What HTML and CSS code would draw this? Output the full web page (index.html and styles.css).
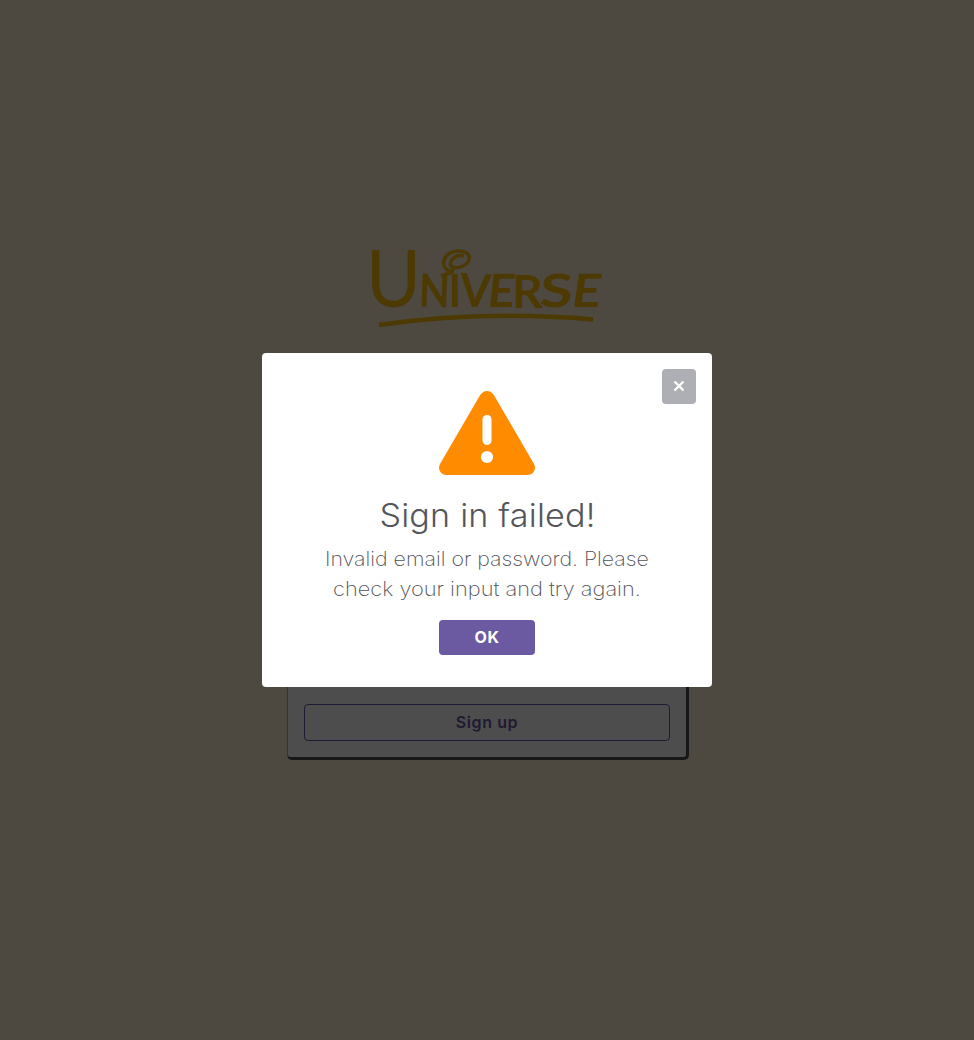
FILE: index.html
```html
<!DOCTYPE html>
<html lang="en">
<head>
<meta charset="utf-8">
<title>Universe</title>
<link rel="stylesheet" href="styles.css">
</head>
<body>
<main class="page">
  <svg class="logo" viewBox="-2 0 240 85" role="img" aria-label="Universe">
    <g class="logo-text">
      <text class="cap" x="-3" y="62" textLength="55" lengthAdjust="spacingAndGlyphs">U</text>
      <text x="50" y="62" textLength="31" lengthAdjust="spacingAndGlyphs" transform="rotate(2 65 45)">N</text>
      <text x="79.500" y="62" textLength="13" lengthAdjust="spacingAndGlyphs">I</text>
      <text x="91" y="62" textLength="31" lengthAdjust="spacingAndGlyphs" transform="rotate(3 108 45)">V</text>
      <text x="118" y="62" textLength="27" lengthAdjust="spacingAndGlyphs" transform="skewX(-6) translate(6 0)">E</text>
      <text x="143" y="63" textLength="31" lengthAdjust="spacingAndGlyphs">R</text>
      <text x="170" y="62" textLength="33" lengthAdjust="spacingAndGlyphs" transform="skewX(-4) translate(4 0)">S</text>
      <text x="204" y="62" textLength="29" lengthAdjust="spacingAndGlyphs" transform="skewX(-8) translate(6 0)">E</text>
    </g>
    <g class="logo-line">
      <path d="M83 27C69 23 74 7 88 6C102 5 104 16 94 21C85 25 78 21 83 15C86 11 91 10 95 11"/>
      <path d="M72 31L83 27L84 23"/>
      <path class="swash" d="M10 80Q115 65 224 74.500"/>
    </g>
  </svg>
  <section class="card"><button class="signup">Sign up</button></section>
</main>
<div class="overlay">
  <section class="modal" role="dialog" aria-modal="true">
    <button class="close" aria-label="Close">
      <svg width="12" height="12" viewBox="0 0 12 12"><path d="M1.500 1.500L10.500 10.500M10.500 1.500L1.500 10.500"/></svg>
    </button>
    <svg class="warning" viewBox="0 0 96 84" aria-hidden="true">
      <path fill="#ff8c00" d="M41.300 3.800Q44 0 48 0T54.700 3.800L95 73Q97 77 95 80.200Q93 84 88.500 84H7.500Q3 84 1 80.200Q-1 77 1 73Z"/>
      <rect x="43.500" y="24" width="9" height="30" rx="4.500" fill="#fff"/>
      <circle cx="48" cy="66" r="6.100" fill="#fff"/>
    </svg>
    <h1 class="title">Sign in failed!</h1>
    <p class="message"><span class="line first">Invalid email or password. Please</span> <span class="line second">check your input and try again.</span></p>
    <button class="ok">OK</button>
  </section>
</div>
</body>
</html>
```
FILE: styles.css
```css
* { box-sizing: border-box; }
body { margin: 0; background: #4d4941; font-family: Inter, "Open Sans", sans-serif; }
button { font-family: inherit; padding: 0; }
.page { height: 1040px; display: flex; flex-direction: column; align-items: center; padding-top: 245px; }
.logo { width: 240px; height: 85px; flex: none; overflow: visible; }
.logo-text { font-family: Lato, sans-serif; font-size: 46px; font-weight: 700; fill: #4d3a02; }
.logo-text .cap { font-size: 79px; font-weight: 400; }
.logo-line { fill: none; stroke: #4d3a02; stroke-width: 3.500; }
.logo-line .swash { stroke-width: 4.500; }
.card { width: 402px; height: 380px; margin: 50px 0 0 2px; display: flex; align-items: flex-end; padding: 0 16px 16px; border: 1px solid; border-width: 1px 3px 3px 1px; border-color: #353535 #171717 #171717 #353535; border-radius: 5px; background: #4d4d4d; }
.signup { width: 366px; height: 37px; padding-bottom: 2px; border: 1px solid #1f1a35; border-radius: 4px; background: transparent; color: #1f1a31; font-size: 16px; font-weight: 600; letter-spacing: .6px; }
.overlay { position: absolute; inset: 0; display: flex; justify-content: center; align-items: center; }
.modal { position: relative; width: 450px; height: 334px; display: flex; flex-direction: column; align-items: center; padding-top: 38px; background: #fff; border-radius: 4px; color: #55565b; }
.close { position: absolute; top: 16px; right: 16px; width: 34px; height: 35px; border: 0; border-radius: 4px; background: #aeafb4; display: grid; place-items: center; padding-bottom: 1px; }
.close path { fill: none; stroke: #fff; stroke-width: 2.400; }
.warning { width: 96px; height: 84px; flex: none; }
.title { margin: 21px 0 0; font-size: 32px; line-height: 40px; font-weight: 300; letter-spacing: .2px; white-space: nowrap; transform: scaleX(1.065); }
.message { margin: 8px 0 0; text-align: center; font-size: 20px; line-height: 30px; font-weight: 200; white-space: nowrap; color: #4f5056; }
.line { display: block; }
.first { transform: scaleX(1.066); }
.second { transform: scaleX(1.09); }
.ok { width: 96px; height: 35px; margin-top: 16px; padding-bottom: 1px; border: 0; border-radius: 4px; background: #6b59a1; color: #fff; font-size: 16px; font-weight: 700; letter-spacing: .6px; }
```
